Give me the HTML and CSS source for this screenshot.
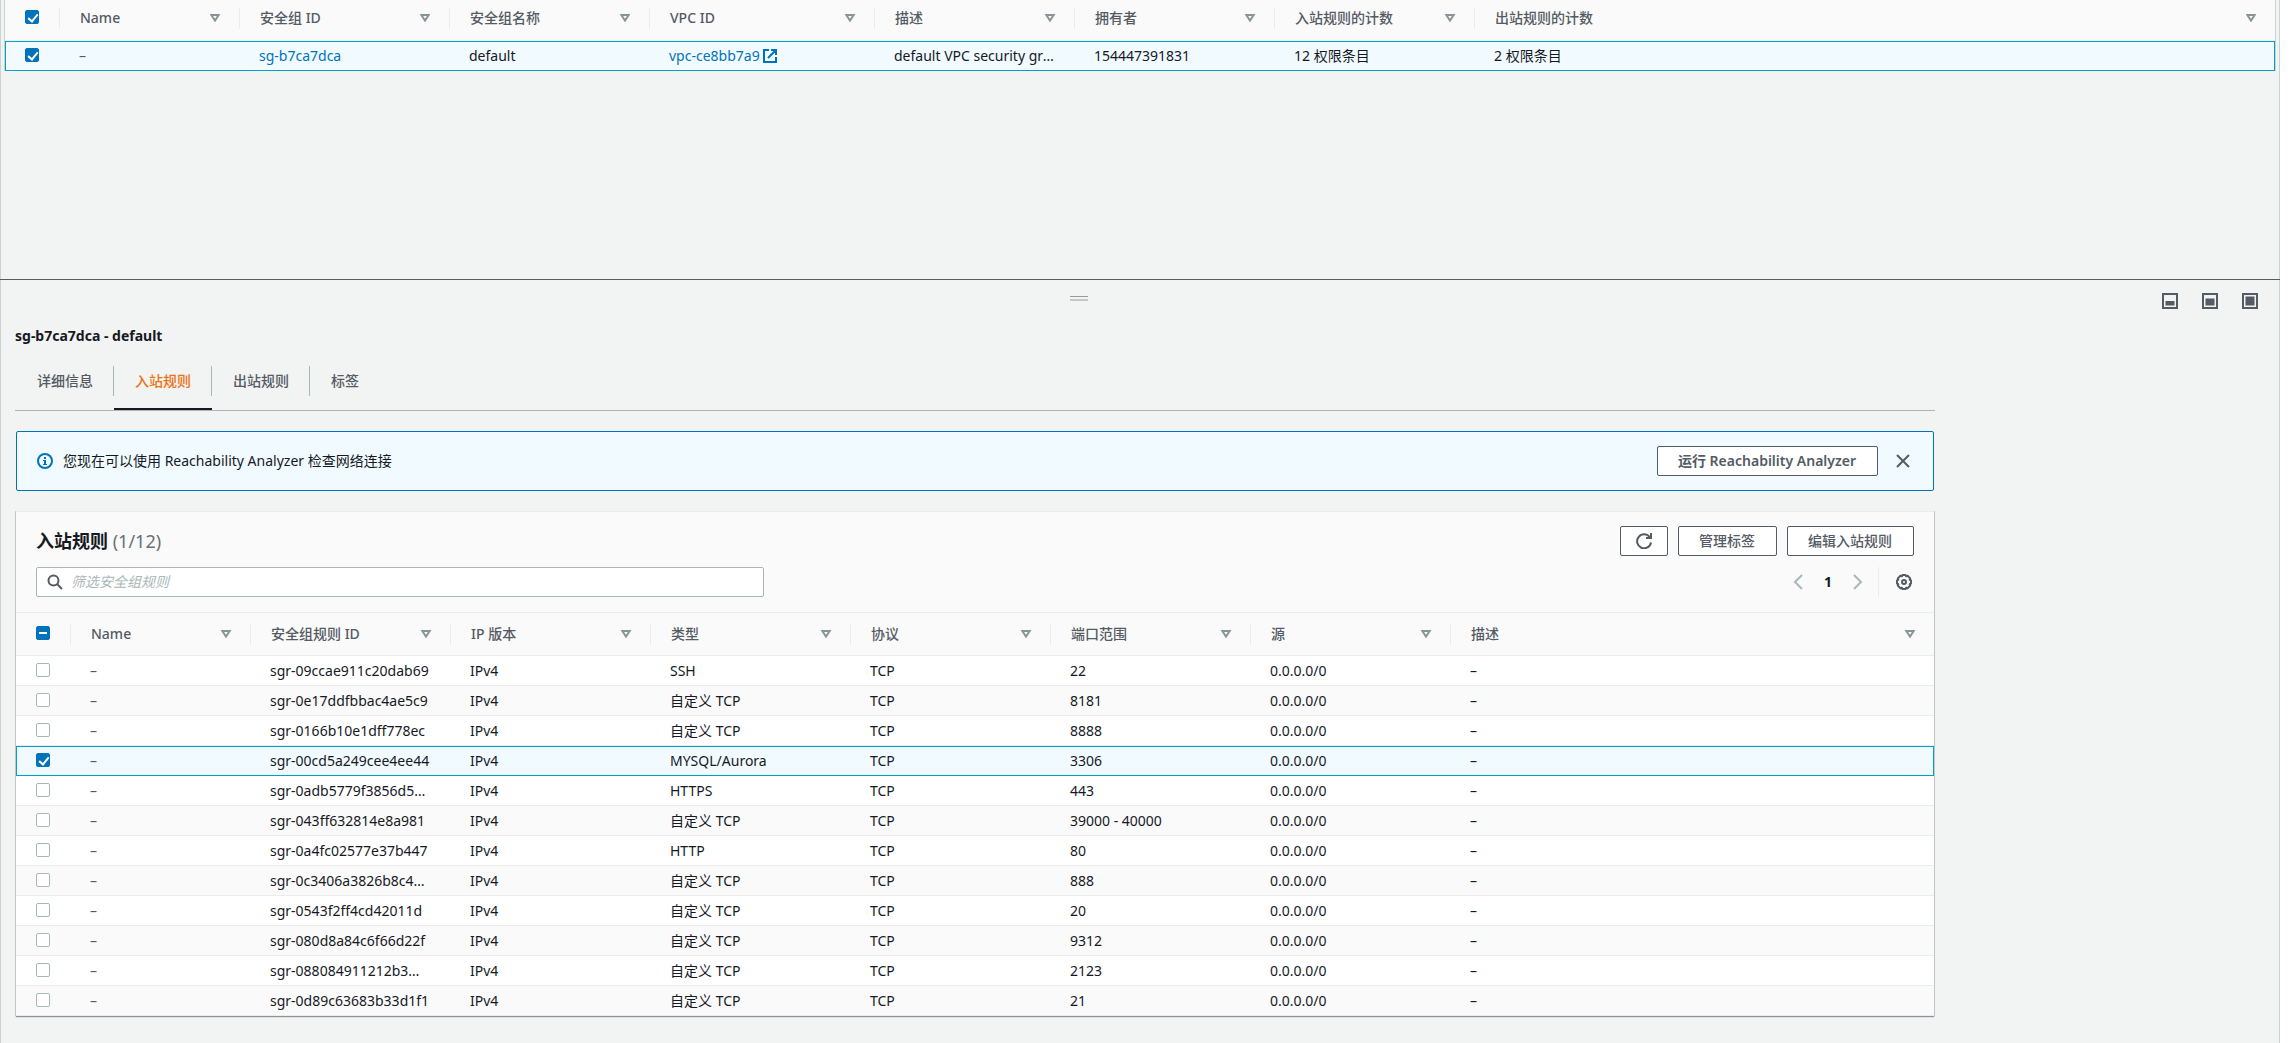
FILE: index.html
```html
<!DOCTYPE html>
<html lang="zh-CN">
  <head>
    <meta charset="UTF-8" />
    <meta name="viewport" content="width=device-width, initial-scale=1.0" />
    <title>安全组</title>
    <link rel="stylesheet" href="styles.css">
  </head>
  <body>
    <!-- Shared icons -->
    <svg class="sprite" aria-hidden="true">
      <symbol id="icon-sort" viewBox="0 0 10 8">
        <path d="M1.300 1h7.400L5 6.600z" fill="none" stroke="currentColor" stroke-width="2" />
      </symbol>
    </svg>

    <main class="page">
      <section class="group-list">
        <table class="grid">
          <colgroup>
            <col class="col-check" />
            <col class="col-name" />
            <col class="col-group-id" />
            <col class="col-base" />
            <col class="col-vpc" />
            <col class="col-base" />
            <col class="col-base" />
            <col class="col-base" />
            <col />
          </colgroup>
          <thead>
            <tr>
              <th class="check"><input type="checkbox" aria-label="全选" checked /></th>
              <th><div class="head">Name<svg class="sort"><use href="#icon-sort" /></svg></div></th>
              <th><div class="head">安全组 ID<svg class="sort"><use href="#icon-sort" /></svg></div></th>
              <th><div class="head">安全组名称<svg class="sort"><use href="#icon-sort" /></svg></div></th>
              <th><div class="head">VPC ID<svg class="sort"><use href="#icon-sort" /></svg></div></th>
              <th><div class="head">描述<svg class="sort"><use href="#icon-sort" /></svg></div></th>
              <th><div class="head">拥有者<svg class="sort"><use href="#icon-sort" /></svg></div></th>
              <th><div class="head">入站规则的计数<svg class="sort"><use href="#icon-sort" /></svg></div></th>
              <th><div class="head">出站规则的计数<svg class="sort"><use href="#icon-sort" /></svg></div></th>
            </tr>
          </thead>
          <tbody>
            <tr class="selected">
              <td class="check"><input type="checkbox" aria-label="选择 sg-b7ca7dca" checked /></td>
              <td>–</td>
              <td><a href="#">sg-b7ca7dca</a></td>
              <td>default</td>
              <td>
                <a href="#" class="external">vpc-ce8bb7a9<svg width="14" height="14" viewBox="0 0 14 14" fill="none" stroke="currentColor" stroke-width="2"><path d="M6 1H1v12h12V8M8 1h5v5M13 1L5 9" /></svg></a>
              </td>
              <td>default VPC security group</td>
              <td>154447391831</td>
              <td>12 权限条目</td>
              <td>2 权限条目</td>
            </tr>
          </tbody>
        </table>
      </section>

      <section class="detail">
        <div class="split-bar">
          <div class="split-handle"></div>
          <div class="split-sizes">
            <button type="button" class="icon-button" aria-label="小面板">
              <svg width="16" height="16" viewBox="0 0 16 16"><rect x="1" y="1" width="14" height="14" fill="none" stroke="currentColor" stroke-width="2" /><rect x="3.500" y="8" width="9" height="4.500" fill="currentColor" /></svg>
            </button>
            <button type="button" class="icon-button" aria-label="中面板">
              <svg width="16" height="16" viewBox="0 0 16 16"><rect x="1" y="1" width="14" height="14" fill="none" stroke="currentColor" stroke-width="2" /><rect x="3.500" y="5.500" width="9" height="7" fill="currentColor" /></svg>
            </button>
            <button type="button" class="icon-button" aria-label="大面板">
              <svg width="16" height="16" viewBox="0 0 16 16"><rect x="1" y="1" width="14" height="14" fill="none" stroke="currentColor" stroke-width="2" /><rect x="3.500" y="3.500" width="9" height="9" fill="currentColor" /></svg>
            </button>
          </div>
        </div>

        <div class="detail-content">
          <h1>sg-b7ca7dca - default</h1>

          <nav class="tabs">
            <button type="button"><span>详细信息</span></button>
            <button type="button" class="active"><span>入站规则</span></button>
            <button type="button"><span>出站规则</span></button>
            <button type="button"><span>标签</span></button>
          </nav>

          <div class="alert">
            <svg class="info" width="16" height="16" viewBox="0 0 16 16"><circle cx="8" cy="8" r="7" fill="none" stroke="currentColor" stroke-width="2" /><path d="M7 4h2v2H7zM6 7h3v4h1v1H6v-1h1V8H6z" fill="currentColor" /></svg>
            <p>您现在可以使用 Reachability Analyzer 检查网络连接</p>
            <button type="button" class="button">运行 Reachability Analyzer</button>
            <button type="button" class="icon-button close" aria-label="关闭">
              <svg width="16" height="16" viewBox="0 0 16 16" fill="none" stroke="currentColor" stroke-width="2"><path d="M2 2l12 12M14 2L2 14" /></svg>
            </button>
          </div>

          <div class="panel">
            <div class="panel-header">
              <div class="panel-row">
                <h2>入站规则 <span>(1/12)</span></h2>
                <div class="actions">
                  <button type="button" class="button refresh" aria-label="刷新">
                    <svg width="16" height="16" viewBox="0 0 16 16" fill="none" stroke="currentColor" stroke-width="2"><path d="M15 9.500A7 7 0 1 1 13.600 4M15 0v5h-5" /></svg>
                  </button>
                  <button type="button" class="button">管理标签</button>
                  <button type="button" class="button">编辑入站规则</button>
                </div>
              </div>
              <div class="panel-row">
                <label class="search">
                  <svg width="16" height="16" viewBox="0 0 16 16" fill="none" stroke="currentColor" stroke-width="2"><circle cx="6.500" cy="6.500" r="5" /><path d="M10 10l5 5" /></svg>
                  <input type="text" placeholder="筛选安全组规则" aria-label="筛选安全组规则" />
                </label>
                <div class="pagination">
                  <button type="button" class="icon-button arrow" aria-label="上一页">
                    <svg width="16" height="16" viewBox="0 0 16 16" fill="none" stroke="currentColor" stroke-width="2"><path d="M12 1L5 8l7 7" /></svg>
                  </button>
                  <button type="button" class="page-number">1</button>
                  <button type="button" class="icon-button arrow" aria-label="下一页">
                    <svg width="16" height="16" viewBox="0 0 16 16" fill="none" stroke="currentColor" stroke-width="2"><path d="M4 1l7 7-7 7" /></svg>
                  </button>
                  <div class="settings">
                    <button type="button" class="icon-button" aria-label="首选项">
                      <svg width="16" height="16" viewBox="0 0 16 16" fill="none" stroke="currentColor"><path stroke-width="2" stroke-linejoin="round" d="M6.500 1h3l.6 1.300 1.500-.5 2.600 2.600-.5 1.500 1.300.6v3l-1.300.6.5 1.500-2.600 2.600-1.500-.5-.6 1.300h-3l-.6-1.300-1.500.5-2.600-2.600.5-1.500L1 9.500v-3l1.300-.6-.5-1.500 2.600-2.600 1.500.5z" /><circle cx="8" cy="8" r="2" stroke-width="2" /></svg>
                    </button>
                  </div>
                </div>
              </div>
            </div>

            <table class="grid rules">
              <colgroup>
                <col class="col-check" />
                <col class="col-name" />
                <col class="col-base" />
                <col class="col-base" />
                <col class="col-base" />
                <col class="col-base" />
                <col class="col-base" />
                <col class="col-base" />
                <col />
              </colgroup>
              <thead>
                <tr>
                  <th class="check"><input type="checkbox" class="partial" aria-label="全选规则" /></th>
                  <th><div class="head">Name<svg class="sort"><use href="#icon-sort" /></svg></div></th>
                  <th><div class="head">安全组规则 ID<svg class="sort"><use href="#icon-sort" /></svg></div></th>
                  <th><div class="head">IP 版本<svg class="sort"><use href="#icon-sort" /></svg></div></th>
                  <th><div class="head">类型<svg class="sort"><use href="#icon-sort" /></svg></div></th>
                  <th><div class="head">协议<svg class="sort"><use href="#icon-sort" /></svg></div></th>
                  <th><div class="head">端口范围<svg class="sort"><use href="#icon-sort" /></svg></div></th>
                  <th><div class="head">源<svg class="sort"><use href="#icon-sort" /></svg></div></th>
                  <th><div class="head">描述<svg class="sort"><use href="#icon-sort" /></svg></div></th>
                </tr>
              </thead>
              <tbody>
                <tr>
                  <td class="check"><input type="checkbox" aria-label="选择 sgr-09ccae911c20dab69" /></td>
                  <td>–</td><td>sgr-09ccae911c20dab69</td><td>IPv4</td><td>SSH</td><td>TCP</td><td>22</td><td>0.0.0.0/0</td><td>–</td>
                </tr>
                <tr>
                  <td class="check"><input type="checkbox" aria-label="选择 sgr-0e17ddfbbac4ae5c9" /></td>
                  <td>–</td><td>sgr-0e17ddfbbac4ae5c9</td><td>IPv4</td><td>自定义 TCP</td><td>TCP</td><td>8181</td><td>0.0.0.0/0</td><td>–</td>
                </tr>
                <tr>
                  <td class="check"><input type="checkbox" aria-label="选择 sgr-0166b10e1dff778ec" /></td>
                  <td>–</td><td>sgr-0166b10e1dff778ec</td><td>IPv4</td><td>自定义 TCP</td><td>TCP</td><td>8888</td><td>0.0.0.0/0</td><td>–</td>
                </tr>
                <tr class="selected">
                  <td class="check"><input type="checkbox" aria-label="选择 sgr-00cd5a249cee4ee44" checked /></td>
                  <td>–</td><td>sgr-00cd5a249cee4ee44</td><td>IPv4</td><td>MYSQL/Aurora</td><td>TCP</td><td>3306</td><td>0.0.0.0/0</td><td>–</td>
                </tr>
                <tr>
                  <td class="check"><input type="checkbox" aria-label="选择 sgr-0adb5779f3856d5…" /></td>
                  <td>–</td><td>sgr-0adb5779f3856d5…</td><td>IPv4</td><td>HTTPS</td><td>TCP</td><td>443</td><td>0.0.0.0/0</td><td>–</td>
                </tr>
                <tr>
                  <td class="check"><input type="checkbox" aria-label="选择 sgr-043ff632814e8a981" /></td>
                  <td>–</td><td>sgr-043ff632814e8a981</td><td>IPv4</td><td>自定义 TCP</td><td>TCP</td><td>39000 - 40000</td><td>0.0.0.0/0</td><td>–</td>
                </tr>
                <tr>
                  <td class="check"><input type="checkbox" aria-label="选择 sgr-0a4fc02577e37b447" /></td>
                  <td>–</td><td>sgr-0a4fc02577e37b447</td><td>IPv4</td><td>HTTP</td><td>TCP</td><td>80</td><td>0.0.0.0/0</td><td>–</td>
                </tr>
                <tr>
                  <td class="check"><input type="checkbox" aria-label="选择 sgr-0c3406a3826b8c4…" /></td>
                  <td>–</td><td>sgr-0c3406a3826b8c4…</td><td>IPv4</td><td>自定义 TCP</td><td>TCP</td><td>888</td><td>0.0.0.0/0</td><td>–</td>
                </tr>
                <tr>
                  <td class="check"><input type="checkbox" aria-label="选择 sgr-0543f2ff4cd42011d" /></td>
                  <td>–</td><td>sgr-0543f2ff4cd42011d</td><td>IPv4</td><td>自定义 TCP</td><td>TCP</td><td>20</td><td>0.0.0.0/0</td><td>–</td>
                </tr>
                <tr>
                  <td class="check"><input type="checkbox" aria-label="选择 sgr-080d8a84c6f66d22f" /></td>
                  <td>–</td><td>sgr-080d8a84c6f66d22f</td><td>IPv4</td><td>自定义 TCP</td><td>TCP</td><td>9312</td><td>0.0.0.0/0</td><td>–</td>
                </tr>
                <tr>
                  <td class="check"><input type="checkbox" aria-label="选择 sgr-088084911212b3…" /></td>
                  <td>–</td><td>sgr-088084911212b3…</td><td>IPv4</td><td>自定义 TCP</td><td>TCP</td><td>2123</td><td>0.0.0.0/0</td><td>–</td>
                </tr>
                <tr>
                  <td class="check"><input type="checkbox" aria-label="选择 sgr-0d89c63683b33d1f1" /></td>
                  <td>–</td><td>sgr-0d89c63683b33d1f1</td><td>IPv4</td><td>自定义 TCP</td><td>TCP</td><td>21</td><td>0.0.0.0/0</td><td>–</td>
                </tr>
              </tbody>
            </table>
          </div>
        </div>
      </section>
    </main>
  </body>
</html>
```
FILE: styles.css
```css
* {
  box-sizing: border-box;
}

body {
  margin: 0;
  background-color: #fff;
  color: #16191f;
  font-family: "Noto Sans", "Noto Sans CJK SC", sans-serif;
  font-size: 14px;
  line-height: 20px;
}

button,
input {
  font: inherit;
  color: inherit;
  margin: 0;
}

h1,
h2,
p {
  margin: 0;
}

a {
  color: #0073bb;
  text-decoration: none;
}

svg {
  display: block;
  flex: none;
}

.sprite {
  display: none;
}

.page {
  display: flex;
  flex-direction: column;
  min-height: 100vh;
  margin-right: 13px;
  background-color: #f2f3f3;
  border-left: 1px solid #ccd1d1;
  border-right: 1px solid #ccd1d1;
}

/* Top list */
.group-list {
  height: 279px;
  padding: 0 4px;
}

.group-list .grid {
  box-shadow: 1px 0 0 #ccd1d1, -1px 0 0 #ccd1d1;
}

.group-list th {
  height: 41px;
  padding-bottom: 3px;
}

/* Tables */
.grid {
  width: 100%;
  table-layout: fixed;
  border-collapse: separate;
  border-spacing: 0;
}

.col-check {
  width: 54px;
}

.col-name {
  width: 180px;
}

.col-group-id {
  width: 210px;
}

.col-base {
  width: 200px;
}

.col-vpc {
  width: 225px;
}

.grid th {
  padding: 0;
  background-color: #fafafa;
  border-bottom: 1px solid #eaeded;
  color: #545b64;
  font-weight: 500;
  text-align: left;
}

.group-list .grid th {
  padding-bottom: 4px;
  vertical-align: middle;
}

.grid td {
  height: 30px;
  padding: 0 20px;
  background-color: #fff;
  border-top: 1px solid transparent;
  border-bottom: 1px solid #eaeded;
  overflow: hidden;
  text-overflow: ellipsis;
  white-space: nowrap;
}

.grid td:nth-child(2) {
  color: #545b64;
}

.grid .check {
  padding-left: 20px;
  padding-right: 0;
}

.grid tbody tr:nth-child(even) td {
  background-color: #fafafa;
}

.grid tbody tr.selected td {
  background-color: #f1faff;
  border-top-color: #00a1c9;
  border-bottom-color: #00a1c9;
}

.grid tr.selected td:first-child {
  border-left: 1px solid #00a1c9;
  padding-left: 19px;
}

.grid tr.selected td:last-child {
  border-right: 1px solid #00a1c9;
}

.head {
  display: flex;
  align-items: center;
  justify-content: space-between;
  height: 21px;
  padding: 0 19px 0 20px;
  border-left: 1px solid #eaeded;
}

.sort {
  width: 10px;
  height: 8px;
  color: #879596;
}

.rules th {
  height: 43px;
}

.external {
  display: flex;
  align-items: center;
  gap: 3px;
}

/* Checkboxes */
input[type="checkbox"] {
  appearance: none;
  display: block;
  position: relative;
  width: 14px;
  height: 14px;
  border: 1px solid #aab7b8;
  border-radius: 2px;
  background-color: #fff;
}

.check input[type="checkbox"] {
  margin-bottom: 2px;
}

input[type="checkbox"]:checked,
input[type="checkbox"].partial {
  background-color: #0073bb;
  border-color: #0073bb;
}

input[type="checkbox"]:checked::after {
  content: "";
  position: absolute;
  left: 4px;
  top: 1px;
  width: 4px;
  height: 8px;
  border: solid #fff;
  border-width: 0 2px 2px 0;
  transform: rotate(40deg);
}

input[type="checkbox"].partial::after {
  content: "";
  position: absolute;
  left: 2px;
  top: 5px;
  width: 8px;
  height: 2px;
  background-color: #fff;
}

/* Buttons */
.button {
  height: 30px;
  padding: 0 21px 0 20px;
  background-color: #fff;
  border: 1px solid #545b64;
  border-radius: 2px;
  color: #545b64;
  font-weight: 600;
  cursor: pointer;
}

.button:hover {
  background-color: #fafafa;
}

.button.refresh {
  padding: 0 15px;
}

.icon-button {
  padding: 0;
  border: none;
  background: none;
  color: #545b64;
  cursor: pointer;
}

/* Detail panel */
.detail {
  flex: 1;
  margin: 0 -1px;
  border-top: 1px solid #545b64;
}

.split-bar {
  display: flex;
  align-items: center;
  height: 44px;
  padding: 0 22px 8px 0;
}

.split-handle {
  width: 18px;
  height: 5px;
  margin: 0 auto;
  border-top: 1px solid #999;
  border-bottom: 2px solid #c3c8c8;
}

.split-sizes {
  display: flex;
  gap: 24px;
  padding: 6px 0 0 4px;
}

.detail-content {
  max-width: 1935px;
  padding: 0 0 20px 15px;
}

h1 {
  padding-top: 2px;
  font-size: 14px;
  line-height: 20px;
  font-weight: 700;
}

.tabs {
  display: flex;
  height: 65px;
  padding: 20px 0 0 1px;
  border-bottom: 1px solid #aab7b8;
}

.tabs button {
  padding: 0 0 12px;
  border: none;
  border-bottom: 2px solid transparent;
  background: none;
  color: #545b64;
  font-weight: 500;
  cursor: pointer;
}

.tabs span {
  display: block;
  padding: 5px 20px 5px 21px;
  border-right: 1px solid #aab7b8;
}

.tabs button:last-child span {
  border-right: none;
}

.tabs .active {
  border-bottom-color: #16191f;
  color: #ec7211;
}

.alert {
  display: flex;
  align-items: center;
  gap: 10px;
  height: 60px;
  margin: 20px 1px;
  padding: 0 22px 0 20px;
  background-color: #f1faff;
  border: 1px solid #0073bb;
  border-radius: 2px;
}

.alert p {
  flex: 1;
}

.info {
  color: #0073bb;
}

.close {
  margin-left: 7px;
}

/* Rules panel */
.panel {
  margin: 0 1px;
  background-color: #fafafa;
  border-top: 1px solid #eaeded;
  box-shadow: 0 1px 1px #879596, 1px 0 0 #ccd1d1, -1px 0 0 #ccd1d1;
}

.panel-header {
  display: flex;
  flex-direction: column;
  gap: 11px;
  padding: 14px 20px 15px;
  border-bottom: 1px solid #eaeded;
}

.panel-row {
  display: flex;
  align-items: center;
  justify-content: space-between;
}

h2 {
  font-size: 18px;
  line-height: 24px;
  font-weight: 700;
}

h2 span {
  color: #687078;
  font-weight: 400;
}

.actions {
  display: flex;
  gap: 10px;
}

.actions .button {
  font-weight: 500;
}

.search {
  display: flex;
  align-items: center;
  gap: 8px;
  width: 100%;
  max-width: 728px;
  height: 30px;
  padding: 0 10px;
  background-color: #fff;
  border: 1px solid #aab7b8;
  border-radius: 2px;
  color: #545b64;
}

.search input {
  flex: 1;
  padding: 0;
  border: none;
  outline: none;
  background: none;
}

.search input::placeholder {
  color: #aab7b8;
  font-style: italic;
}

.pagination {
  display: flex;
  align-items: center;
}

.arrow {
  color: #aab7b8;
}

.page-number {
  width: 44px;
  padding: 0;
  border: none;
  background: none;
  font-weight: 700;
  cursor: pointer;
}

.settings {
  display: flex;
  align-items: center;
  height: 30px;
  margin-left: 12px;
  padding: 0 2px 0 17px;
  border-left: 1px solid #eaeded;
}
```
